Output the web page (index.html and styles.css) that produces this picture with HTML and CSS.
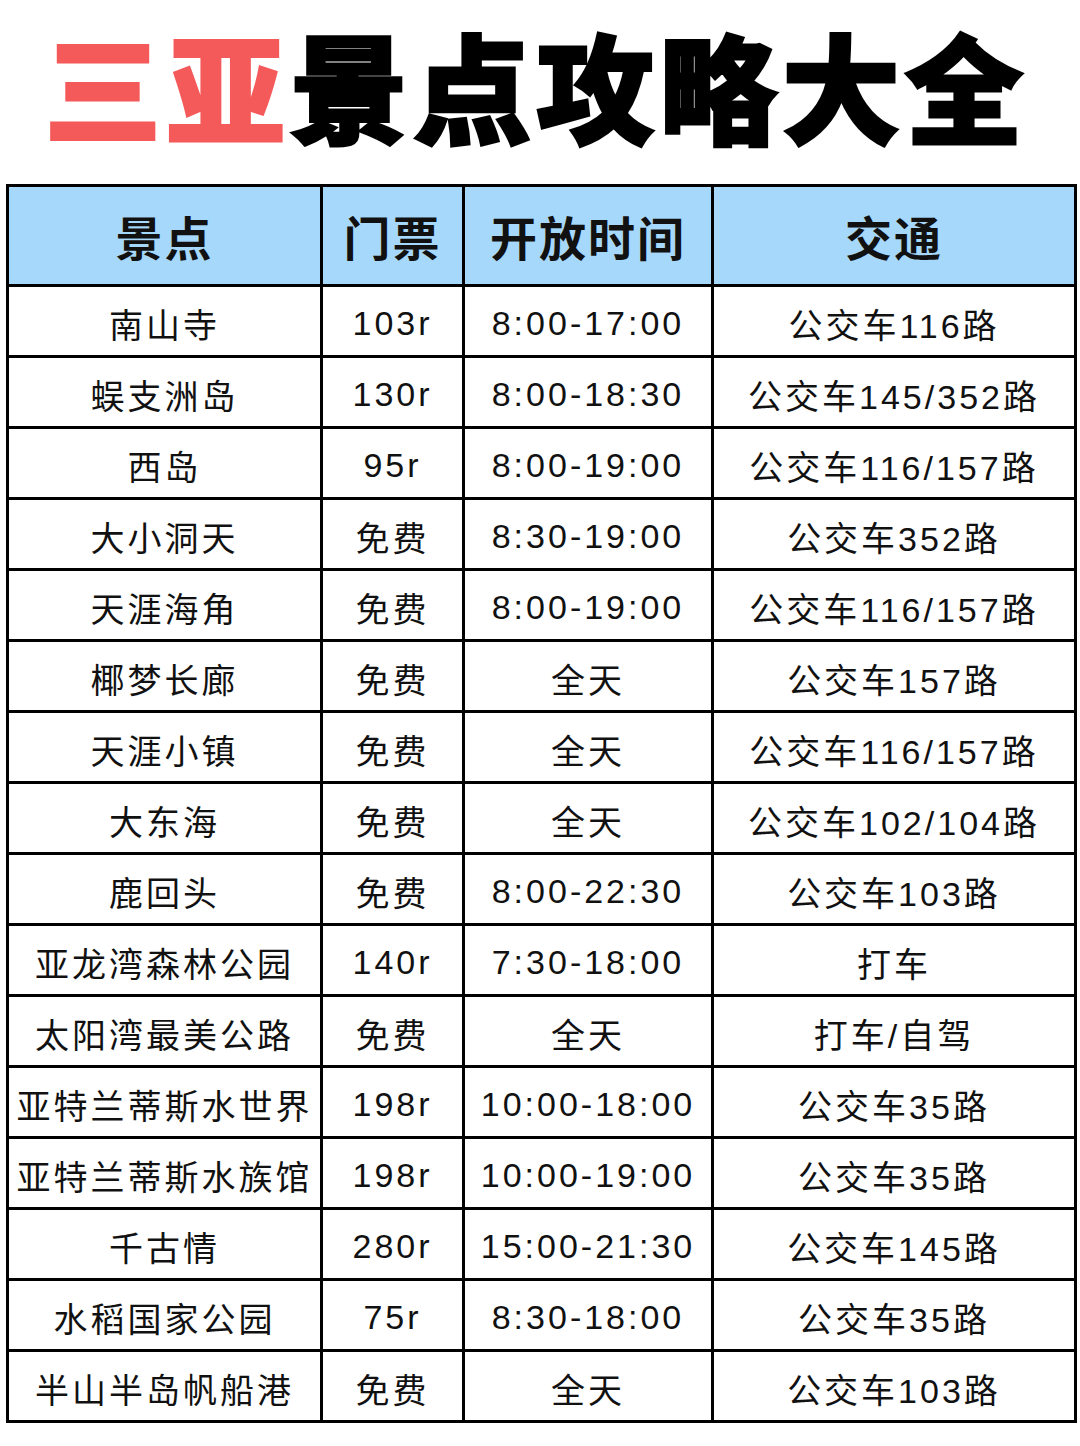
FILE: index.html
```html
<!DOCTYPE html>
<html lang="zh-CN">
<head>
<meta charset="utf-8">
<title>三亚景点攻略大全</title>
<link rel="stylesheet" href="styles.css">
</head>
<body>
<div class="page">
  <h1 class="title"><span class="red">三亚</span><span class="black">景点攻略大全</span></h1>
  <table class="guide">
    <colgroup>
      <col class="c1"><col class="c2"><col class="c3"><col class="c4">
    </colgroup>
    <thead>
      <tr><th>景点</th><th>门票</th><th>开放时间</th><th>交通</th></tr>
    </thead>
    <tbody>
      <tr><td>南山寺</td><td>103r</td><td>8:00-17:00</td><td>公交车116路</td></tr>
      <tr><td>蜈支洲岛</td><td>130r</td><td>8:00-18:30</td><td>公交车145/352路</td></tr>
      <tr><td>西岛</td><td>95r</td><td>8:00-19:00</td><td>公交车116/157路</td></tr>
      <tr><td>大小洞天</td><td>免费</td><td>8:30-19:00</td><td>公交车352路</td></tr>
      <tr><td>天涯海角</td><td>免费</td><td>8:00-19:00</td><td>公交车116/157路</td></tr>
      <tr><td>椰梦长廊</td><td>免费</td><td>全天</td><td>公交车157路</td></tr>
      <tr><td>天涯小镇</td><td>免费</td><td>全天</td><td>公交车116/157路</td></tr>
      <tr><td>大东海</td><td>免费</td><td>全天</td><td>公交车102/104路</td></tr>
      <tr><td>鹿回头</td><td>免费</td><td>8:00-22:30</td><td>公交车103路</td></tr>
      <tr><td>亚龙湾森林公园</td><td>140r</td><td>7:30-18:00</td><td>打车</td></tr>
      <tr><td>太阳湾最美公路</td><td>免费</td><td>全天</td><td>打车/自驾</td></tr>
      <tr><td>亚特兰蒂斯水世界</td><td>198r</td><td>10:00-18:00</td><td>公交车35路</td></tr>
      <tr><td>亚特兰蒂斯水族馆</td><td>198r</td><td>10:00-19:00</td><td>公交车35路</td></tr>
      <tr><td>千古情</td><td>280r</td><td>15:00-21:30</td><td>公交车145路</td></tr>
      <tr><td>水稻国家公园</td><td>75r</td><td>8:30-18:00</td><td>公交车35路</td></tr>
      <tr><td>半山半岛帆船港</td><td>免费</td><td>全天</td><td>公交车103路</td></tr>
    </tbody>
  </table>
</div>
</body>
</html>
```
FILE: styles.css
```css
html, body {
  margin: 0;
  padding: 0;
  background: #ffffff;
}
.page {
  width: 1080px;
  height: 1446px;
  padding: 0 4px 0 6px;
  box-sizing: border-box;
}
.title {
  margin: 0;
  height: 184px;
  display: flex;
  align-items: center;
  justify-content: flex-start;
  padding: 0 0 16px 38px;
  font-family: "Noto Sans CJK SC", "Noto Sans", sans-serif;
  font-weight: 900;
  font-size: 118px;
  letter-spacing: 5px;
  line-height: 1;
  box-sizing: border-box;
}
.title .red {
  color: #f55a5a;
  -webkit-text-stroke: 2px #f55a5a;
}
.title .black {
  color: #000;
  -webkit-text-stroke: 3px #000;
}
.guide {
  width: 1068px;
  border-collapse: collapse;
  table-layout: fixed;
  font-family: "Liberation Sans", "Noto Sans CJK SC", sans-serif;
  color: #111;
}
.c1 { width: 314px; }
.c2 { width: 142px; }
.c3 { width: 249px; }
.c4 { width: 363px; }
.guide th, .guide td {
  border: 3px solid #000;
  text-align: center;
  padding: 0;
  white-space: nowrap;
}
.guide th {
  background: #a6d8fb;
  height: 97px;
  font-family: "Noto Sans CJK SC", sans-serif;
  font-weight: 700;
  font-size: 47px;
  letter-spacing: 2px;
}
.guide td {
  height: 64px;
  padding-top: 4px;
  font-size: 34px;
  letter-spacing: 3px;
}
```
